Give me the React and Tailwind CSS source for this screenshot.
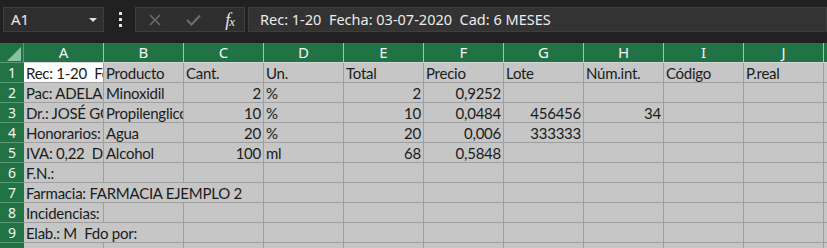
import React from "react";

const cols = ["A", "B", "C", "D", "E", "F", "G", "H", "I", "J"];

// each row: list of [text, align, span]
const rows = [
  [
    ["Rec: 1-20  Fecha: 03-07-2020  Cad: 6 MESES"],
    ["Producto"],
    ["Cant."],
    ["Un."],
    ["Total"],
    ["Precio"],
    ["Lote"],
    ["Núm.int."],
    ["Código"],
    ["P.real"],
  ],
  [
    ["Pac: ADELA GARCÍA"],
    ["Minoxidil"],
    ["2", "r"],
    ["%"],
    ["2", "r"],
    ["0,9252", "r"],
    [""],
    [""],
    [""],
    [""],
  ],
  [
    ["Dr.: JOSÉ GONZÁLEZ"],
    ["Propilenglicol"],
    ["10", "r"],
    ["%"],
    ["10", "r"],
    ["0,0484", "r"],
    ["456456", "r"],
    ["34", "r"],
    [""],
    [""],
  ],
  [
    ["Honorarios: Sí"],
    ["Agua"],
    ["20", "r"],
    ["%"],
    ["20", "r"],
    ["0,006", "r"],
    ["333333", "r"],
    [""],
    [""],
    [""],
  ],
  [
    ["IVA: 0,22  Dto: 0"],
    ["Alcohol"],
    ["100", "r"],
    ["ml"],
    ["68", "r"],
    ["0,5848", "r"],
    [""],
    [""],
    [""],
    [""],
  ],
  [["F.N.:"], [""], [""], [""], [""], [""], [""], [""], [""], [""]],
  [["Farmacia: FARMACIA EJEMPLO 2", "l", 3], [""], [""], [""], [""], [""], [""], [""]],
  [["Incidencias:"], [""], [""], [""], [""], [""], [""], [""], [""], [""]],
  [["Elab.: M  Fdo por:", "l", 2], [""], [""], [""], [""], [""], [""], [""], [""]],
  [[""], [""], [""], [""], [""], [""], [""], [""], [""], [""]],
];

const spanClass = { 1: "col-span-1", 2: "col-span-2", 3: "col-span-3" };

function Cell({ text, align, span, selected }) {
  return (
    <div
      className={`${spanClass[span || 1]} h-[20px] border-r border-b border-[#9f9f9f] ${
        selected ? "bg-white" : "bg-[#c6c6c6]"
      } overflow-hidden whitespace-pre flex items-center pt-[1px] text-[15px] tracking-[-0.25px] text-[#1b1b1b] ${
        align === "r" ? "justify-end pr-[2px]" : "justify-start pl-[2px]"
      }`}
    >
      {text}
    </div>
  );
}

export default function App() {
  return (
    <div className="w-[827px] h-[248px] overflow-hidden bg-[#c6c6c6] font-['Lato',sans-serif]">
      {/* formula bar */}
      <div className="h-[43px] bg-[#212121] flex items-start pt-[7px] pl-[3px] font-['Noto_Sans',sans-serif]">
        <div className="w-[101px] h-[25px] bg-[#2e2e2e] border border-[#3e3e3e] flex items-center justify-between pl-[7px] pr-[5px]">
          <span className="text-[15px] text-[#ececec]">A1</span>
          <svg width="10" height="6" viewBox="0 0 10 6">
            <path d="M1 1 L9 1 L5 5 Z" fill="#e0e0e0" />
          </svg>
        </div>
        <div className="w-[31px] h-[25px] flex flex-col items-center justify-center gap-[3px] pl-[1px]">
          <span className="w-[3px] h-[3px] bg-[#e6e6e6]" />
          <span className="w-[3px] h-[3px] bg-[#e6e6e6]" />
          <span className="w-[3px] h-[3px] bg-[#e6e6e6]" />
        </div>
        <div className="w-[110px] h-[25px] bg-[#2e2e2e] border border-[#3e3e3e] flex items-center justify-between pl-[13px] pr-[10px]">
          <svg width="12" height="12" viewBox="0 0 12 12">
            <path d="M1 1 L11 11 M11 1 L1 11" stroke="#6c6c6c" strokeWidth="1.6" />
          </svg>
          <svg width="15" height="12" viewBox="0 0 15 12">
            <path d="M1 6 L5.5 10.5 L14 1.5" stroke="#6c6c6c" strokeWidth="2.2" fill="none" />
          </svg>
          <span className="text-[18px] italic text-[#e6e6e6] font-['Liberation_Serif',serif] leading-none tracking-[-1px]">
            f<span className="text-[13px]">x</span>
          </span>
        </div>
        <div className="flex-1 ml-[3px] h-[25px] bg-[#333333] border border-[#3e3e3e] flex items-center pl-[11px] text-[14.5px] text-[#ececec] whitespace-pre">
          Rec: 1-20  Fecha: 03-07-2020  Cad: 6 MESES
        </div>
      </div>

      {/* sheet */}
      <div className="grid grid-cols-[24px_repeat(10,80px)_1fr]">
        <div className="h-[20px] bg-[#217346] border-r border-b border-[#5c9a78] flex items-end justify-end pr-[2px] pb-[1px]">
          <svg width="14" height="14" viewBox="0 0 14 14">
            <path d="M14 0 L14 14 L0 14 Z" fill="#88c2a3" />
          </svg>
        </div>
        {cols.map((c) => (
          <div
            key={c}
            className="h-[20px] bg-[#217346] border-r border-[#a3c6b1] border-b border-b-[#d7d7d7] flex items-center justify-center text-[15px] text-[#f4f4f4] font-['Noto_Sans',sans-serif]"
          >
            {c}
          </div>
        ))}
        <div className="h-[20px] bg-[#217346] border-b border-b-[#d7d7d7]" />

        {rows.map((r, i) => (
          <React.Fragment key={i}>
            <div className="h-[20px] bg-[#217346] border-b border-[#5c9a78] flex items-center justify-center text-[14px] text-[#f4f4f4] font-['Noto_Sans',sans-serif]">
              {i + 1}
            </div>
            {r.map(([text, align, span], j) => (
              <Cell key={j} text={text} align={align} span={span} selected={i === 0 && j === 0} />
            ))}
            <div className="h-[20px] border-b border-[#9f9f9f] bg-[#c6c6c6]" />
          </React.Fragment>
        ))}
      </div>
    </div>
  );
}
